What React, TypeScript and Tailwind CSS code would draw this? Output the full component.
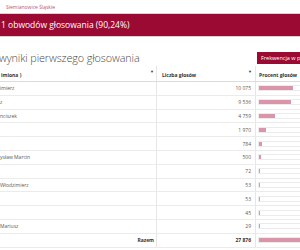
import React from 'react';

type Row = { name: string; votes: number };

const rows: Row[] = [
  { name: 'imierz', votes: 10075 },
  { name: 'z', votes: 9536 },
  { name: 'nciszek', votes: 4759 },
  { name: '', votes: 1970 },
  { name: '', votes: 784 },
  { name: 'ysław Marcin', votes: 500 },
  { name: '', votes: 72 },
  { name: 'Włodzimierz', votes: 53 },
  { name: '', votes: 53 },
  { name: '', votes: 45 },
  { name: 'Mariusz', votes: 29 },
];

const total = 27876;

// liczby z odstępem tysięcy, jak na stronie
const fmt = (n: number) => n.toString().replace(/\B(?=(\d{3})+(?!\d))/g, ' ');

const Bar: React.FC<{ value: number }> = ({ value }) => (
  <div className="w-[97px] h-[6px] border border-[#ececec] bg-white">
    <div className="h-full bg-[#db95a9]" style={{ width: `${(value / total) * 100}%` }}></div>
  </div>
);

export default function App() {
  return (
    <div className="w-[300px] h-[250px] overflow-hidden bg-white font-['Open_Sans',sans-serif]">
      <div className="h-[13px] pl-[6px] pt-[4px] text-[5px] leading-[6px] text-[#b5566f]">Siemianowice Śląskie</div>

      <div className="border-y border-[#d4d4d4]">
        <div className="h-[22px] bg-[#9b0a32] flex items-center text-white text-[8.5px] pl-[1px]">
          1 obwodów głosowania (90,24%)
        </div>
      </div>

      <div className="mt-[13px] flex items-center h-[16px] w-[360px]">
        <h2 className="w-[258px] text-[10.8px] font-light text-[#4a4a4a] -ml-[1px] tracking-[-0.1px]">wyniki pierwszego głosowania</h2>
        <div className="h-[12px] px-[4px] flex items-center bg-[#9b0a32] text-white text-[5.5px] whitespace-nowrap">
          Frekwencja w punktach
        </div>
      </div>

      <div className="w-[360px] text-[5px] leading-[6px]">
        <div className="grid grid-cols-[157px_99px_104px] h-[16px] border-b border-[#dcdcdc] font-bold text-[#333]">
          <div className="relative border-r border-[#e6e6e6] flex items-center pl-[1px] pt-[2px]">
            imiona )
            <span className="absolute right-[2px] top-[3px] text-[4px]">▼</span>
          </div>
          <div className="relative border-r border-[#e6e6e6] flex items-center pl-[5px] pt-[2px]">
            Liczba głosów
            <span className="absolute right-[3px] top-[3px] text-[4px]">▼</span>
          </div>
          <div className="flex items-center pl-[3px] pt-[2px]">Procent głosów</div>
        </div>

        {rows.map((r, i) => (
          <div key={i} className="grid grid-cols-[157px_99px_104px] h-[13.8px] border-b border-[#ebebeb] text-[#5a5a5a]">
            <div className="border-r border-[#e6e6e6] flex items-center whitespace-nowrap overflow-hidden">{r.name}</div>
            <div className="border-r border-[#e6e6e6] flex items-center justify-end pr-[4px]">{fmt(r.votes)}</div>
            <div className="flex items-center pl-[2px]">
              <Bar value={r.votes} />
            </div>
          </div>
        ))}

        <div className="grid grid-cols-[157px_99px_104px] h-[13.8px] border-b border-[#ebebeb] font-bold text-[#333]">
          <div className="border-r border-[#e6e6e6] flex items-center justify-end pr-[2px]">Razem</div>
          <div className="border-r border-[#e6e6e6] flex items-center justify-end pr-[4px]">{fmt(total)}</div>
          <div className="flex items-center pl-[2px]">
            <Bar value={total} />
          </div>
        </div>
      </div>
    </div>
  );
}
